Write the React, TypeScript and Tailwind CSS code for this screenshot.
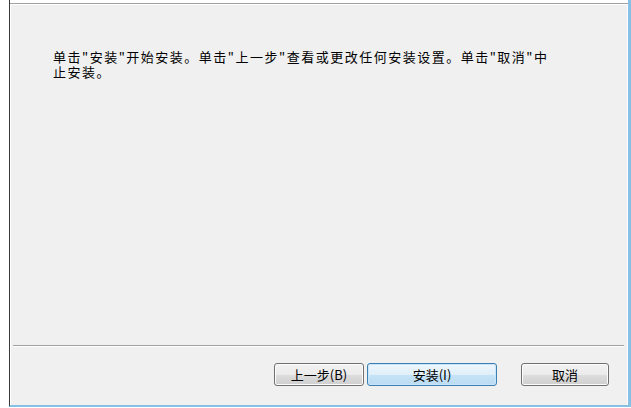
/**
 * InstallConfirmPage - шаг мастера установки перед началом установки
 */

const font = "font-['Noto_Sans_CJK_SC','Noto_Sans',sans-serif]";

function DialogButton({
  label,
  width,
  primary = false,
}: {
  label: string;
  width: string;
  primary?: boolean;
}) {
  return (
    <button
      className={`${width} h-[23px] rounded-[3px] border text-[13px] leading-none text-black ${
        primary
          ? 'border-[#3c7fb1] bg-[linear-gradient(to_bottom,#eef6fc_0%,#e0eff9_50%,#c6e3f6_51%,#bcdcf2_100%)] shadow-[inset_0_0_0_1px_#c8e6fb]'
          : 'border-[#707070] bg-[linear-gradient(to_bottom,#f2f2f2_0%,#ebebeb_50%,#dddddd_51%,#cfcfcf_100%)] shadow-[inset_0_0_0_1px_#fcfcfc]'
      }`}
    >
      {label}
    </button>
  );
}

export default function App() {
  return (
    <div className={`w-[631px] h-[408px] bg-white flex ${font}`}>
      {/* рамка окна */}
      <div className="ml-[9px] flex-1 h-[407px] flex flex-col border-l border-l-[#3a3a3a] border-r-[3px] border-r-[#86c0e4] border-b-2 border-b-[#86c0e4]">
        {/* низ шапки */}
        <div className="h-[3px] bg-white" />
        <div className="h-px bg-[#a0a0a0]" />
        <div className="h-px bg-white" />

        <div className="flex-1 flex flex-col bg-[#f0f0f0] border-l border-r border-white">
          <p className="mt-[44px] ml-[42px] w-[505px] text-[13px] leading-[15px] tracking-[1.5px] text-black">
            单击"安装"开始安装。单击"上一步"查看或更改任何安装设置。单击"取消"中止安装。
          </p>

          <div className="flex-1" />

          {/* разделитель */}
          <div className="ml-[2px] mr-[3px] h-px bg-[#a0a0a0]" />
          <div className="ml-[2px] mr-[3px] h-px bg-white" />

          <div className="flex justify-end items-center pt-[16px] pb-[19px] pr-[18px]">
            <DialogButton label="上一步(B)" width="w-[90px]" />
            <div className="w-[3px]" />
            <DialogButton label="安装(I)" width="w-[130px]" primary />
            <div className="w-[24px]" />
            <DialogButton label="取消" width="w-[88px]" />
          </div>
        </div>
      </div>
    </div>
  );
}
